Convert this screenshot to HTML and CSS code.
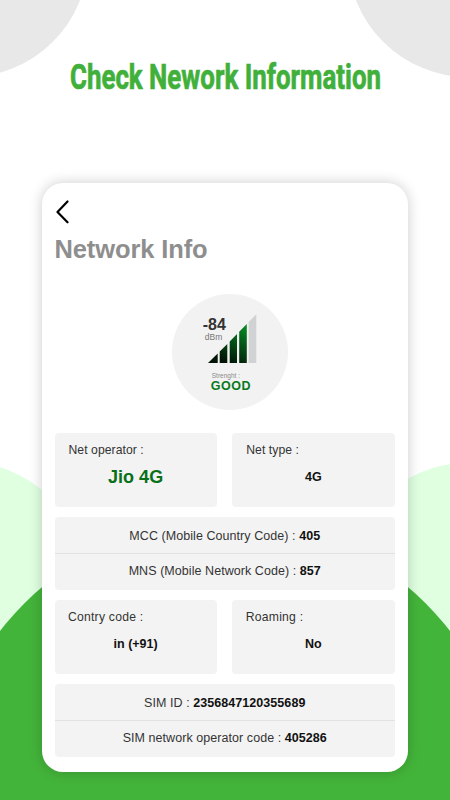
FILE: index.html
```html
<!DOCTYPE html>
<html lang="en">
<head>
<meta charset="utf-8">
<title>Network Information</title>
<link rel="stylesheet" href="styles.css">
</head>
<body>
<svg class="backdrop" viewBox="0 0 450 800" aria-hidden="true">
  <circle class="gray" cx="-32" cy="-43" r="120"/>
  <circle class="gray" cx="468" cy="-43" r="120"/>
  <circle class="mint" cx="-35" cy="582" r="120"/>
  <circle class="mint" cx="467" cy="583" r="120"/>
  <circle class="green" cx="225" cy="803.7" r="283.6"/>
</svg>
<main class="page">
  <h1 class="headline">
    <svg width="450" height="70" viewBox="0 40 450 70">
      <text x="70" y="89" textLength="311" lengthAdjust="spacingAndGlyphs">Check Nework Information</text>
    </svg>
  </h1>
  <section class="phone">
    <svg class="back" width="16" height="24" viewBox="0 0 16 24"><path d="M12.500 1.500 2.500 12 12.500 22.300"/></svg>
    <h2 class="title">Network Info</h2>
    <div class="gauge">
      <div class="reading">
        <div class="level"><div class="value">-84</div><div class="unit">dBm</div></div>
        <svg class="bars" width="49" height="50" viewBox="0 0 49 50">
          <defs><linearGradient id="signal" gradientUnits="userSpaceOnUse" x1="42" y1="6" x2="20" y2="49">
            <stop offset="0" stop-color="#08a026"/><stop offset=".45" stop-color="#055f1c"/><stop offset="1" stop-color="#021405"/>
          </linearGradient></defs>
          <path fill="url(#signal)" d="M0 49 9.700 39.500V49ZM11.700 49V37.500L19.300 30V49ZM21.700 49V27.500L29 20V49ZM31.200 49V17.700L38.800 10V49Z"/>
          <path fill="#d1d2d4" d="M40.700 49V8L48.300.300V49Z"/>
        </svg>
      </div>
      <div class="strength"><div class="caption">Strenght :</div><div class="grade">GOOD</div></div>
    </div>
    <div class="grid">
      <div class="tile"><div class="label shift">Net operator :</div><div class="data big">Jio 4G</div></div>
      <div class="tile"><div class="label shift">Net type :</div><div class="data">4G</div></div>
      <div class="list">
        <div class="row">MCC (Mobile Country Code) : <b>405</b></div>
        <div class="row">MNS (Mobile Network Code) : <b>857</b></div>
      </div>
      <div class="tile"><div class="label wide">Contry code :</div><div class="data">in (+91)</div></div>
      <div class="tile"><div class="label wide">Roaming :</div><div class="data">No</div></div>
      <div class="list">
        <div class="row">SIM ID : <b>2356847120355689</b></div>
        <div class="row">SIM network operator code : <b>405286</b></div>
      </div>
    </div>
  </section>
</main>
</body>
</html>
```
FILE: styles.css
```css
* { box-sizing: border-box; }
body {
  margin: 0;
  width: 450px;
  height: 800px;
  overflow: hidden;
  background: #fff;
  font-family: "Liberation Sans", Arial, sans-serif;
  color: #111;
}
.backdrop { position: absolute; inset: 0; width: 450px; height: 800px; z-index: -1; }
.gray { fill: #e8e8e8; }
.mint { fill: #e0ffe1; }
.green { fill: #43b43a; }
.page { display: flex; flex-direction: column; align-items: center; padding-top: 40px; }
.headline { margin: 0 0 73px; height: 70px; }
.headline svg { display: block; }
.headline text {
  font: 700 35.5px Roboto, sans-serif;
  fill: #40b03a;
  stroke: #40b03a;
  stroke-width: .7;
}
.phone {
  width: 366px;
  height: 589px;
  padding: 17px 13px 15px 12.5px;
  border-radius: 21px;
  background: #fff;
  box-shadow: 0 0 14px rgba(0, 0, 0, .2);
  display: flex;
  flex-direction: column;
}
.back { display: block; flex: none; fill: none; stroke: #000; stroke-width: 2.2; stroke-linecap: round; stroke-linejoin: round; }
.title { margin: 10px 0 0; height: 30px; font-size: 25.5px; line-height: 30px; color: #8e8e8e; letter-spacing: -.12px; }
.gauge {
  flex: none;
  align-self: center;
  width: 116px;
  height: 116px;
  margin: 30px 0 23px 10px;
  border-radius: 50%;
  background: #f2f2f2;
}
.reading { display: flex; padding-top: 20px; margin-left: 31px; height: 70px; }
.level { width: 5px; flex: none; white-space: nowrap; padding-top: 2px; }
.value { font-size: 16px; line-height: 17px; font-weight: 700; color: #333; }
.unit { font-size: 8.5px; line-height: 8px; margin: 0 0 0 2px; color: #777; }
.bars { display: block; flex: none; }
.strength { margin: 8px 0 0 39px; }
.caption { font-size: 6.5px; line-height: 8px; color: #8a8a8a; margin-left: 1px; }
.grade { font-size: 12.5px; line-height: 12px; font-weight: 700; color: #087a1b; letter-spacing: .5px; }
.grid { display: grid; grid-template-columns: 1fr 1fr; column-gap: 15px; row-gap: 10px; }
.tile { height: 73.5px; padding: 9px 14px 0 13.5px; border-radius: 4px; background: #f3f3f3; }
.label { font-size: 12.2px; line-height: 16px; color: #333; letter-spacing: .05px; }
.shift { padding-left: .5px; }
.wide { letter-spacing: .22px; }
.data { margin-top: 9px; font-size: 12.5px; line-height: 20px; font-weight: 700; text-align: center; }
.big { font-size: 18px; color: #08701a; }
.list { grid-column: 1 / -1; height: 73.5px; border-radius: 4px; background: #f3f3f3; }
.row { height: 36.5px; line-height: 38px; text-align: center; font-size: 12.5px; letter-spacing: .06px; color: #333; white-space: nowrap; }
.row + .row { border-top: 1px solid #e2e2e2; line-height: 34px; }
.row b { color: #111; }
```
